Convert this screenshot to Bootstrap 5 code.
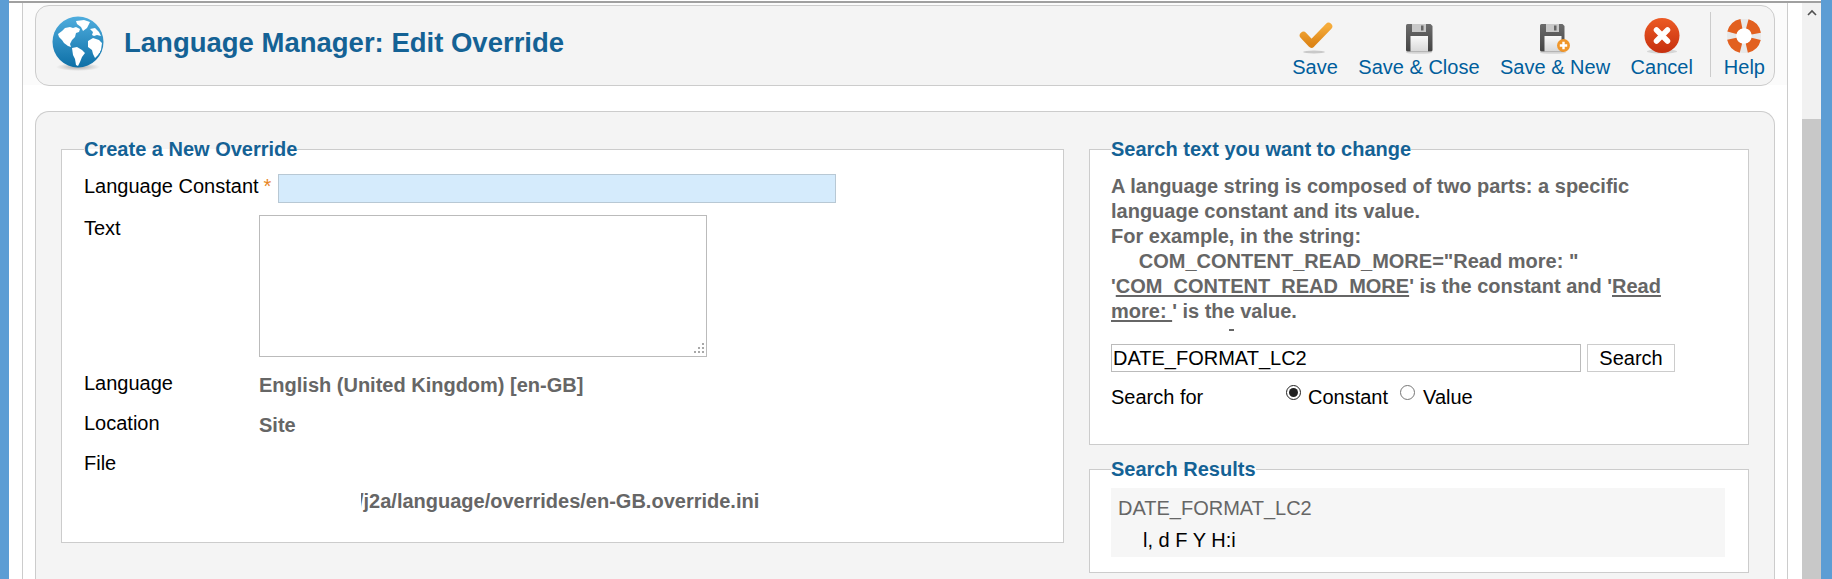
<!DOCTYPE html>
<html lang="en">
<head>
<meta charset="utf-8">
<title>Language Manager: Edit Override</title>
<link rel="stylesheet" href="https://cdn.jsdelivr.net/npm/bootstrap@5.3.0/dist/css/bootstrap.min.css">
<style>
html,body{height:579px;overflow:hidden;background:#fff}
body{font-family:"Liberation Sans",Arial,sans-serif;font-size:20px;line-height:25px;color:#000}
.frame{height:579px}
.edge-l{width:9px;background:#5c9dd4;flex:none}
.edge-r{width:11px;background:#5c9dd4;flex:none}
.pane{flex:1 1 auto;min-width:0;margin-top:1px;border-top:2px solid #a0a0a0}
.gutter-l{width:13px;flex:none}
.sheet{width:1766px;flex:none;border-left:1px solid #ccc;border-right:1px solid #ccc}
.gutter-r{width:14px;flex:none}
.sbar{width:19px;flex:none;background:#f1f1f1}
.sbar-btn{height:19px}
.sbar-thumb{margin-top:97px;height:470px;background:#c8c8c8}
.backing{background:#fbfbfb;height:82px;padding:2px 12px 0 12px}
.panel-top{height:81px;background:#f4f4f4;border:1px solid #ccc;border-radius:14px;padding:0 9px 0 16px}
.brand{padding-bottom:6px}
.globe{width:52px;height:56px;flex:none;margin-top:2px}
.page-title{font-size:27.5px;line-height:32px;font-weight:700;color:#146295;margin:0 0 0 20px}
.tool{color:#005e9c;text-decoration:none}
.tool svg{display:block;margin:0 auto}
.tools{padding-top:12px;gap:20.5px}
.tool-cap{display:block;line-height:25px;margin-top:1px;white-space:nowrap}
.tool-sep{width:1px;height:65px;background:#ccc;margin:-6px -8px 0 -3px}
.panel-main{margin:26px 12px 0;height:470px;background:#f4f4f4;border:1px solid #ccc;border-radius:14px 14px 0 0;border-bottom:0;padding:27px 26px 0 25px;gap:25px}
.col-left{width:1003px;flex:none}
.col-right{width:660px;flex:none}
.fset{background:#fff;border:1px solid #ccc;margin:0;padding:0 21px;min-width:0}
.fset>legend{float:none;width:auto;padding:0;margin:0;font-size:20px;line-height:20px;font-weight:700;color:#146295}
.fset-new{height:404px;padding-left:22px}
.fset-search{height:306px}
.fset-res{height:114px;margin-top:14px}
.field{display:flex}
.lbl{width:175px;flex:none}
.req{color:#e8851f;margin-left:5px}
.in-const{width:558px;height:29px;background:#d5ebfc;border:1px solid #b8c8d4;margin-left:7px;border-radius:0;padding:0 3px}
.text-wrap{width:448px}
.lbl-text{padding-top:1px}
.in-text{height:142px;border:1px solid #bbb;border-radius:0;padding:2px;resize:none}
.grip{position:absolute;right:2px;bottom:2px;display:block}
.val{font-weight:700;color:#666}
.row-const{margin-top:15px}
.row-text{margin-top:12px}
.row-lang{margin-top:14px;height:25px}
.row-loc{margin-top:15px;height:25px}
.row-file{margin-top:15px;height:25px}
.val-drop{position:relative;top:2px}
.path{margin:13px 0 0 277px;height:25px;overflow:hidden;text-indent:-3px}
.explain{font-size:20px;font-weight:700;color:#666;margin-top:15px;width:560px}
.explain u{text-underline-offset:2px}
.clip-tick{width:5px;height:2px;background:#666;margin:5px 0 0 118px}
.search-line{margin-top:13px;gap:6px}
.in-search{width:470px;height:28px;border:1px solid #bbb;border-radius:0;padding:0 1px;font:inherit;color:#000}
.btn-find{width:88px;height:28px;background:#fff;border:1px solid #ccc;border-radius:0;padding:0;font:inherit;color:#000}
.for-line{margin-top:13px}
.for-lbl{width:174px;flex:none}
.rd{width:15px;height:15px;margin:0 7px 0 1px;accent-color:#222;flex:none}
.rd-two{margin-left:12px;margin-right:8px}
.res-box{background:#f6f6f6;height:69px;margin-top:9px;padding:8px 7px 0;width:614px}
.res-key{color:#666}
.res-val{padding-left:25px;margin-top:7px}
</style>
</head>
<body>
<div class="frame d-flex">
  <div class="edge-l"></div>
  <div class="pane d-flex">
    <div class="gutter-l"></div>
    <div class="sheet">
      <div class="backing">
        <div class="panel-top d-flex justify-content-between">
          <div class="brand d-flex align-items-center">
            <svg class="globe" viewBox="0 0 52 56" aria-hidden="true">
              <defs>
                <linearGradient id="gl" x1="0" y1="0" x2="0" y2="1"><stop offset="0" stop-color="#4fadde"/><stop offset="1" stop-color="#0d6fa6"/></linearGradient>
                <radialGradient id="sh"><stop offset="0" stop-color="#aaa"/><stop offset="1" stop-color="#f4f4f4"/></radialGradient>
              </defs>
              <ellipse cx="26" cy="51" rx="22" ry="4" fill="url(#sh)"/>
              <circle cx="26" cy="26" r="25.5" fill="url(#gl)"/>
              <path fill="#fff" d="M6 18l4-3 3-3 5-1 3 1 3-1 4 2-1 3-3 1-1 4-3 3-2 4 1 3-3-1-4-3-2-3-3-3z"/>
              <path fill="#fff" d="M24 5l8-1 6 2-3 6-4 3-2-4-4-3z"/>
              <path fill="#fff" d="M20 32l5-1 5 3 3 3-3 4-2 5-2 4-2-1-1-6-2-4z"/>
              <path fill="#fff" d="M36 25l5-3 6 2 3 3-1 7-3 5-3 3-2-4-1-4-4-3z"/>
              <path fill="#fff" d="M38 13l5-1 4 4 2 4-4-1-3 1-2-1 1-3z"/>
              <circle cx="47" cy="36" r="1" fill="#fff"/>
            </svg>
            <h1 class="page-title">Language Manager: Edit Override</h1>
          </div>
          <div class="tools d-flex">
            <a class="tool text-center" href="#">
              <svg width="36" height="36" viewBox="0 0 36 36" aria-hidden="true"><defs><linearGradient id="ck" x1="0" y1="0" x2="0" y2="1"><stop offset="0" stop-color="#f5ab3a"/><stop offset="1" stop-color="#dd8517"/></linearGradient></defs><ellipse cx="17" cy="34" rx="11" ry="1.5" fill="#c9c9c9"/><path d="M6.5 17.500L14.500 26 31.500 8.500" fill="none" stroke="url(#ck)" stroke-width="7.500" stroke-linecap="round" stroke-linejoin="round"/></svg>
              <span class="tool-cap">Save</span>
            </a>
            <a class="tool text-center" href="#">
              <svg width="36" height="36" viewBox="0 0 36 36" aria-hidden="true"><defs><linearGradient id="fl" x1="0" y1="0" x2="0" y2="1"><stop offset="0" stop-color="#6c6c6c"/><stop offset="1" stop-color="#444"/></linearGradient><linearGradient id="lb" x1="0" y1="0" x2="0" y2="1"><stop offset="0" stop-color="#fafafa"/><stop offset="1" stop-color="#d8d8d8"/></linearGradient></defs><ellipse cx="18" cy="34.500" rx="13" ry="1.300" fill="#d4d4d4"/><path d="M5 7.500A1.500 1.500 0 0 1 6.500 6H29.500l2 2V32a1.500 1.500 0 0 1-1.500 1.500H6.500A1.500 1.500 0 0 1 5 32z" fill="url(#fl)"/><rect x="11" y="6" width="14" height="8" fill="#c9c9c9"/><rect x="20" y="7.500" width="2.500" height="5" fill="#666"/><rect x="9.500" y="18" width="17.500" height="15.500" fill="url(#lb)"/></svg>
              <span class="tool-cap">Save &amp; Close</span>
            </a>
            <a class="tool text-center" href="#">
              <svg width="36" height="36" viewBox="0 0 36 36" aria-hidden="true"><ellipse cx="16" cy="34.500" rx="13" ry="1.300" fill="#d4d4d4"/><path d="M3 7.500A1.500 1.500 0 0 1 4.500 6H25.500l2 2V32a1.500 1.500 0 0 1-1.500 1.500H4.500A1.500 1.500 0 0 1 3 32z" fill="url(#fl)"/><rect x="9" y="6" width="13" height="8" fill="#c9c9c9"/><rect x="17" y="7.500" width="2.500" height="5" fill="#666"/><rect x="7.500" y="18" width="17" height="15.500" fill="url(#lb)"/><circle cx="26.500" cy="27.500" r="6.500" fill="#f0962a"/><path d="M26.500 23.800v7.400M22.800 27.500h7.400" stroke="#fff" stroke-width="2.400"/></svg>
              <span class="tool-cap">Save &amp; New</span>
            </a>
            <a class="tool text-center" href="#">
              <svg width="38" height="36" viewBox="0 0 38 36" aria-hidden="true"><defs><linearGradient id="cx" x1="0" y1="0" x2="0" y2="1"><stop offset="0" stop-color="#ec5a24"/><stop offset="1" stop-color="#c6300f"/></linearGradient></defs><ellipse cx="19" cy="33.500" rx="15" ry="2" fill="#d6d6d6"/><circle cx="19" cy="17.500" r="17.500" fill="url(#cx)"/><path d="M13.500 12l11 11M24.500 12l-11 11" stroke="#fff" stroke-width="5.500" stroke-linecap="round"/></svg>
              <span class="tool-cap">Cancel</span>
            </a>
            <span class="tool-sep"></span>
            <a class="tool text-center" href="#">
              <svg width="36" height="36" viewBox="0 0 36 36" aria-hidden="true"><circle cx="18" cy="18" r="12.500" fill="none" stroke="#e8e8e8" stroke-width="9"/><circle cx="18" cy="18" r="12.500" fill="none" stroke="#e2601f" stroke-width="9.500" stroke-dasharray="13.630 6" stroke-dashoffset="-3"/><circle cx="18" cy="18" r="7.500" fill="#fff"/></svg>
              <span class="tool-cap">Help</span>
            </a>
          </div>
        </div>
      </div>
      <div class="panel-main d-flex">
        <div class="col-left">
          <fieldset class="fset fset-new">
            <legend>Create a New Override</legend>
            <div class="field row-const">
              <label for="k">Language Constant<span class="req">*</span></label>
              <input id="k" type="text" class="form-control in-const">
            </div>
            <div class="field row-text">
              <label class="lbl lbl-text" for="t">Text</label>
              <div class="text-wrap position-relative">
                <textarea id="t" class="form-control in-text"></textarea>
                <svg class="grip" width="12" height="12" viewBox="0 0 12 12" aria-hidden="true"><path fill="#a8a8a8" d="M9 0h2v2H9zM9 4h2v2H9zM5 4h2v2H5zM9 8h2v2H9zM5 8h2v2H5zM1 8h2v2H1z"/></svg>
              </div>
            </div>
            <div class="field row-lang"><span class="lbl">Language</span><span class="val val-drop">English (United Kingdom) [en-GB]</span></div>
            <div class="field row-loc"><span class="lbl">Location</span><span class="val val-drop">Site</span></div>
            <div class="field row-file"><span class="lbl">File</span></div>
            <div class="val path">/j2a/language/overrides/en-GB.override.ini</div>
          </fieldset>
        </div>
        <div class="col-right">
          <fieldset class="fset fset-search">
            <legend>Search text you want to change</legend>
            <div class="explain">A language string is composed of two parts: a specific language constant and its value.<br>For example, in the string:<br>&nbsp;&nbsp;&nbsp;&nbsp;&nbsp;COM_CONTENT_READ_MORE="Read more: "<br>'<u>COM_CONTENT_READ_MORE</u>' is the constant and '<u>Read</u> <u>more:&nbsp;</u>' is the value.</div>
            <div class="clip-tick"></div>
            <div class="d-flex search-line">
              <input type="text" class="in-search" value="DATE_FORMAT_LC2">
              <button type="button" class="btn-find">Search</button>
            </div>
            <div class="d-flex for-line">
              <span class="for-lbl">Search for</span>
              <input type="radio" name="f" class="rd" checked>
              <span>Constant</span>
              <input type="radio" name="f" class="rd rd-two">
              <span>Value</span>
            </div>
          </fieldset>
          <fieldset class="fset fset-res">
            <legend>Search Results</legend>
            <div class="res-box">
              <div class="res-key">DATE_FORMAT_LC2</div>
              <div class="res-val">l, d F Y H:i</div>
            </div>
          </fieldset>
        </div>
      </div>
    </div>
    <div class="gutter-r"></div>
    <div class="sbar">
      <div class="sbar-btn d-flex justify-content-center align-items-center"><svg width="10" height="7" viewBox="0 0 10 7" aria-hidden="true"><path d="M1 6l4-4 4 4" fill="none" stroke="#505050" stroke-width="1.600"/></svg></div>
      <div class="sbar-thumb"></div>
    </div>
  </div>
  <div class="edge-r"></div>
</div>
<script src="https://cdn.jsdelivr.net/npm/bootstrap@5.3.0/dist/js/bootstrap.bundle.min.js"></script>
</body>
</html>
